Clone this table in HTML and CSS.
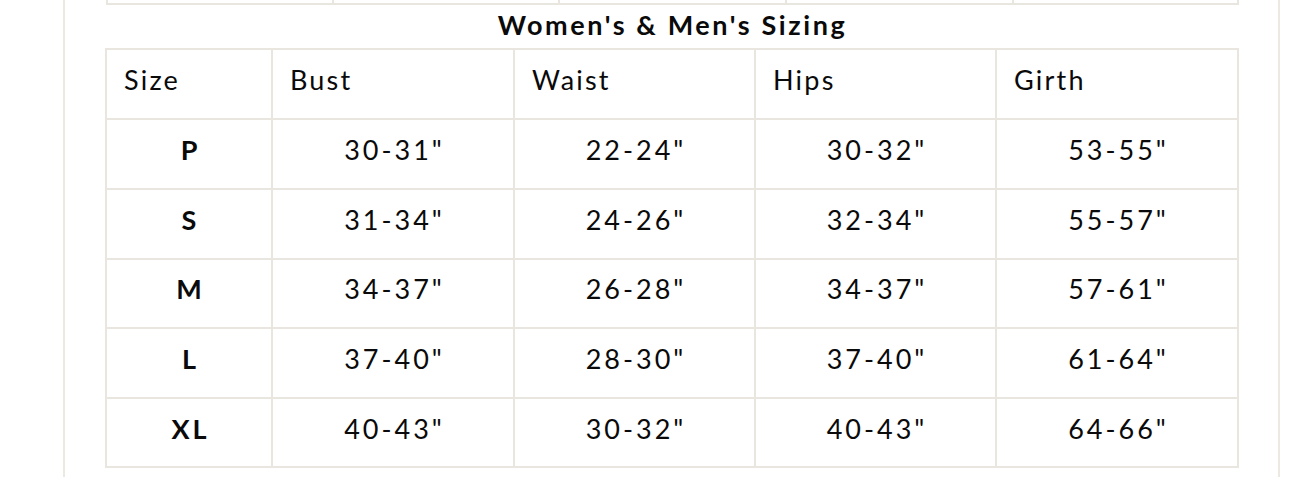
FILE: index.html
```html
<!DOCTYPE html>
<html>
<head>
<meta charset="utf-8">
<link rel="stylesheet" href="styles.css">
</head>
<body>
<div class="wrap">
  <div class="prev">
    <div class="prev-cell"></div>
    <div class="prev-cell"></div>
    <div class="prev-cell"></div>
    <div class="prev-cell"></div>
    <div class="prev-cell"></div>
  </div>
  <h2 class="title">Women's &amp; Men's Sizing</h2>
  <table class="sizes">
    <colgroup>
      <col class="c1"><col class="c2"><col class="c3"><col class="c4"><col class="c5">
    </colgroup>
    <thead>
      <tr><th>Size</th><th>Bust</th><th>Waist</th><th>Hips</th><th>Girth</th></tr>
    </thead>
    <tbody>
      <tr><td class="sz">P</td><td>30-31"</td><td>22-24"</td><td>30-32"</td><td>53-55"</td></tr>
      <tr><td class="sz">S</td><td>31-34"</td><td>24-26"</td><td>32-34"</td><td>55-57"</td></tr>
      <tr><td class="sz">M</td><td>34-37"</td><td>26-28"</td><td>34-37"</td><td>57-61"</td></tr>
      <tr><td class="sz">L</td><td>37-40"</td><td>28-30"</td><td>37-40"</td><td>61-64"</td></tr>
      <tr><td class="sz">XL</td><td>40-43"</td><td>30-32"</td><td>40-43"</td><td>64-66"</td></tr>
    </tbody>
  </table>
</div>
</body>
</html>
```

FILE: styles.css
```css
html, body {
  margin: 0;
  padding: 0;
  background: #ffffff;
}
body {
  font-family: Lato, "Open Sans", sans-serif;
  color: #0a0a0a;
}
.wrap {
  margin-left: 63px;
  width: 1133px;
  padding: 0 39px 10px 41px;
  border-left: 2px solid #ebe9e2;
  border-right: 2px solid #ebe9e2;
  min-height: 477px;
  box-sizing: content-box;
}
.prev {
  display: grid;
  grid-template-columns: 226px 226px 227px 227px 1fr;
  height: 5px;
  border-bottom: 2px solid #e8e6df;
  border-left: 2px solid #e8e6df;
  border-right: 2px solid #e8e6df;
  width: 1133px;
  box-sizing: border-box;
}
.prev-cell {
  border-right: 2px solid #e8e6df;
}
.prev-cell:last-child {
  border-right: none;
}
.title {
  margin: 0;
  height: 43px;
  line-height: 40px;
  text-align: center;
  font-size: 27px;
  font-weight: 700;
  letter-spacing: 2.6px;
  color: #0a0a0a;
}
.sizes {
  border-collapse: collapse;
  width: 1132px;
  margin-left: -1px;
  table-layout: fixed;
}
.c1 { width: 166px; }
.c2 { width: 242px; }
.c3 { width: 241px; }
.c4 { width: 241px; }
.c5 { width: 242px; }
.sizes th, .sizes td {
  border: 2px solid #e8e6df;
  height: 69.6px;
  padding: 0 0 9px 0;
  box-sizing: border-box;
  font-size: 27px;
  vertical-align: middle;
}
.sizes th {
  text-align: left;
  font-weight: 400;
  letter-spacing: 2.2px;
  padding-left: 17px;
  padding-bottom: 10px;
  height: 70.4px;
}
.sizes td {
  text-align: center;
  font-weight: 400;
  letter-spacing: 3px;
  padding-left: 3px;
}
.sizes td.sz {
  font-weight: 700;
  letter-spacing: 3px;
}
```
